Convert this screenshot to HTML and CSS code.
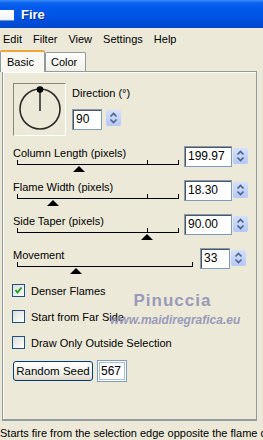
FILE: index.html
```html
<!DOCTYPE html>
<html lang="en">
<head>
    <meta charset="UTF-8">
    <title>Fire</title>
    <link rel="stylesheet" href="styles.css">
</head>
<body>

<div class="window">
    <div class="titlebar">
        <span class="app-icon"></span>
        <span class="title">Fire</span>
    </div>

    <div class="menubar">
        <span>Edit</span>
        <span>Filter</span>
        <span>View</span>
        <span>Settings</span>
        <span>Help</span>
    </div>

    <div class="tabs">
        <span class="tab active">Basic</span>
        <span class="tab">Color</span>
    </div>

    <div class="panel">
        <div class="direction">
            <div class="dial">
                <svg width="51" height="51" viewBox="0 0 51 51">
                    <circle cx="26" cy="25" r="20" fill="none" stroke="#2a2a2a" stroke-width="1.6"/>
                    <line x1="26" y1="6" x2="26" y2="27" stroke="#555" stroke-width="2"/>
                    <circle cx="26" cy="5.5" r="3.3" fill="#000"/>
                </svg>
            </div>
            <div class="dir-fields">
                <div class="dir-label">Direction (°)</div>
                <div class="field">
                    <div class="num dir-num">90</div>
                    <span class="spin"><svg width="15" height="16" viewBox="0 0 15 16"><path d="M4.5 6.5 L7.5 3.5 L10.5 6.5" fill="none" stroke="#4d6185" stroke-width="1.6"/><path d="M4.5 9.5 L7.5 12.5 L10.5 9.5" fill="none" stroke="#4d6185" stroke-width="1.6"/></svg></span>
                </div>
            </div>
        </div>

        <div class="slider-row">
            <div class="slider-col">
                <div class="slider-label">Column Length (pixels)</div>
                <div class="track">
                    <i class="tick" style="left: 0px"></i>
                    <i class="tick" style="left: 130px"></i>
                    <i class="tick" style="left: 161px"></i>
                    <b class="thumb" style="left: 62px"></b>
                </div>
            </div>
            <div class="num">199.97</div>
            <span class="spin"><svg width="15" height="16" viewBox="0 0 15 16"><path d="M4.5 6.5 L7.5 3.5 L10.5 6.5" fill="none" stroke="#4d6185" stroke-width="1.6"/><path d="M4.5 9.5 L7.5 12.5 L10.5 9.5" fill="none" stroke="#4d6185" stroke-width="1.6"/></svg></span>
        </div>

        <div class="slider-row">
            <div class="slider-col">
                <div class="slider-label">Flame Width (pixels)</div>
                <div class="track">
                    <i class="tick" style="left: 0px"></i>
                    <i class="tick" style="left: 130px"></i>
                    <i class="tick" style="left: 161px"></i>
                    <b class="thumb" style="left: 36px"></b>
                </div>
            </div>
            <div class="num">18.30</div>
            <span class="spin"><svg width="15" height="16" viewBox="0 0 15 16"><path d="M4.5 6.5 L7.5 3.5 L10.5 6.5" fill="none" stroke="#4d6185" stroke-width="1.6"/><path d="M4.5 9.5 L7.5 12.5 L10.5 9.5" fill="none" stroke="#4d6185" stroke-width="1.6"/></svg></span>
        </div>

        <div class="slider-row">
            <div class="slider-col">
                <div class="slider-label">Side Taper (pixels)</div>
                <div class="track">
                    <i class="tick" style="left: 0px"></i>
                    <i class="tick" style="left: 130px"></i>
                    <i class="tick" style="left: 161px"></i>
                    <b class="thumb" style="left: 130px"></b>
                </div>
            </div>
            <div class="num">90.00</div>
            <span class="spin"><svg width="15" height="16" viewBox="0 0 15 16"><path d="M4.5 6.5 L7.5 3.5 L10.5 6.5" fill="none" stroke="#4d6185" stroke-width="1.6"/><path d="M4.5 9.5 L7.5 12.5 L10.5 9.5" fill="none" stroke="#4d6185" stroke-width="1.6"/></svg></span>
        </div>

        <div class="slider-row">
            <div class="slider-col wide">
                <div class="slider-label">Movement</div>
                <div class="track wide">
                    <i class="tick" style="left: 0px"></i>
                    <i class="tick" style="left: 175px"></i>
                    <b class="thumb" style="left: 59px"></b>
                </div>
            </div>
            <div class="num short">33</div>
            <span class="spin"><svg width="15" height="16" viewBox="0 0 15 16"><path d="M4.5 6.5 L7.5 3.5 L10.5 6.5" fill="none" stroke="#4d6185" stroke-width="1.6"/><path d="M4.5 9.5 L7.5 12.5 L10.5 9.5" fill="none" stroke="#4d6185" stroke-width="1.6"/></svg></span>
        </div>

        <div class="checks">
            <div class="check-row">
                <span class="box"><svg width="11" height="11" viewBox="0 0 11 11"><path d="M2.5 5 L4.5 7.5 L8.5 2.5" fill="none" stroke="#21a121" stroke-width="2"/></svg></span>
                <span>Denser Flames</span>
            </div>
            <div class="check-row">
                <span class="box"></span>
                <span>Start from Far Side</span>
            </div>
            <div class="check-row">
                <span class="box"></span>
                <span>Draw Only Outside Selection</span>
            </div>
        </div>

        <div class="seed-row">
            <span class="button">Random Seed</span>
            <span class="seed">567</span>
        </div>

        <div class="watermark">
            <div class="wm-name">Pinuccia</div>
            <div class="wm-url">www.maidiregrafica.eu</div>
        </div>
    </div>

    <div class="status">Starts fire from the selection edge opposite the flame direction</div>
</div>

</body>
</html>
```

FILE: styles.css
```css
body {
    margin: 0;
    background-color: #ECE9D8;
    font-family: 'Liberation Sans', 'DejaVu Sans', sans-serif;
    font-size: 11px;
    color: #000;
    overflow: hidden;
}

.window {
    width: 263px;
    height: 440px;
    overflow: hidden;
}

.titlebar {
    height: 28px;
    display: flex;
    align-items: center;
    background: linear-gradient(#3d8cf8 0, #0a62f0 3px, #0058ea 9px, #0054e3 60%, #0046cc 100%);
}

.app-icon {
    width: 14px;
    height: 10px;
    margin-top: 2px;
    background: linear-gradient(#ffffff, #eef2fb);
    border-bottom: 1px solid #6d8fd0;
}

.title {
    margin-left: 7px;
    color: #fff;
    font-weight: bold;
    font-size: 13px;
    text-shadow: 1px 1px 0 #0a2e86;
}

.menubar {
    height: 21px;
    display: flex;
    align-items: center;
    gap: 11px;
    padding-left: 3px;
    background-color: #ECE9D8;
}

.tabs {
    height: 22px;
    display: flex;
    align-items: flex-end;
}

.tab {
    height: 18px;
    line-height: 18px;
    padding: 0 5px;
    width: 29px;
    border: 1px solid #919B9C;
    border-bottom: none;
    border-radius: 2px 2px 0 0;
    background: linear-gradient(#fefefe, #f0efe8);
}

.tab.active {
    position: relative;
    z-index: 1;
    height: 20px;
    line-height: 20px;
    width: 32px;
    padding: 0 5px 0 6px;
    margin-bottom: -1px;
    border-top: 2px solid #f0a63a;
    background: #f8f7f2;
}

.panel {
    position: relative;
    height: 350px;
    width: 255px;
    margin-left: 2px;
    box-sizing: border-box;
    border: 1px solid #919B9C;
    border-bottom-width: 2px;
    box-shadow: inset 1px 1px 0 #fbfbf8;
    padding: 11px 0 0 10px;
}

.direction {
    display: flex;
    gap: 6px;
    height: 63px;
}

.dial {
    width: 51px;
    height: 51px;
    border: 1px solid;
    border-color: #8a877a #fff #fff #8a877a;
}

.dir-label {
    margin-top: 4px;
    height: 13px;
    line-height: 13px;
}

.field {
    display: flex;
    margin-top: 9px;
}

.num {
    width: 43px;
    height: 19px;
    line-height: 19px;
    padding-left: 3px;
    box-sizing: content-box;
    background: #fff;
    border: 1px solid #7F9DB9;
    box-shadow: inset 1px 1px 0 #555;
    font-size: 12px;
}

.num.dir-num {
    width: 25px;
}

.num.short {
    width: 25px;
}

.spin {
    width: 15px;
    height: 16px;
    margin: 2px 0 0 1px;
    border-radius: 2px;
    background: linear-gradient(#d4e0fd, #b4c8f6);
}

.spin svg {
    display: block;
}

.field .spin {
    margin-left: 4px;
    margin-top: 1px;
}

.slider-row {
    display: flex;
    height: 34px;
}

.slider-col {
    width: 171px;
}

.slider-col.wide {
    width: 187px;
}

.slider-label {
    margin-top: 1px;
    height: 13px;
    line-height: 13px;
}

.track {
    position: relative;
    margin-left: 4px;
    width: 162px;
    height: 4px;
    border-bottom: 1px solid #000;
}

.track.wide {
    width: 176px;
}

.tick {
    position: absolute;
    bottom: 0;
    width: 1px;
    height: 4px;
    background: #000;
}

.thumb {
    position: absolute;
    top: 6px;
    margin-left: -6px;
    width: 0;
    height: 0;
    border-left: 6px solid transparent;
    border-right: 6px solid transparent;
    border-bottom: 6px solid #000;
}

.checks {
    margin-top: 2px;
    margin-left: -1px;
    display: flex;
    flex-direction: column;
    gap: 13px;
}

.check-row {
    display: flex;
    align-items: center;
    gap: 6px;
    height: 13px;
}

.box {
    width: 11px;
    height: 11px;
    border: 1px solid #1c5180;
    background: linear-gradient(135deg, #dcdcd7, #fff);
}

.box svg {
    display: block;
}

.seed-row {
    display: flex;
    align-items: center;
    margin-top: 11px;
    gap: 4px;
}

.button {
    width: 78px;
    height: 18px;
    line-height: 18px;
    text-align: center;
    border: 1px solid #003C74;
    border-radius: 3px;
    background: linear-gradient(#ffffff, #f3f2ec 60%, #dcd8cc);
    font-size: 11.5px;
}

.seed {
    width: 25px;
    height: 20px;
    line-height: 20px;
    padding-left: 3px;
    background: #fff;
    border: 1px solid #7F9DB9;
    box-shadow: inset 0 0 0 1px #fff, inset 0 0 0 2px #a9bdd3;
    font-size: 12px;
}

.watermark {
    position: absolute;
    left: 107px;
    top: 220px;
    width: 125px;
    text-align: center;
    color: #9a9abb;
    pointer-events: none;
}

.wm-name {
    font-size: 17px;
    font-weight: bold;
    letter-spacing: 1px;
    line-height: 18px;
}

.wm-url {
    font-size: 12px;
    font-weight: bold;
    font-style: italic;
    line-height: 14px;
    margin-top: 3px;
}

.status {
    margin-top: 5px;
    white-space: nowrap;
    line-height: 14px;
}
```
